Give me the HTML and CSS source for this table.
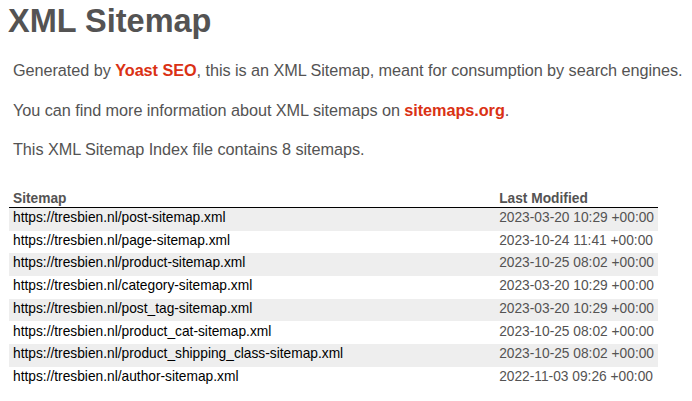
FILE: index.html
```html
<!DOCTYPE html>
<html>
<head>
<meta charset="utf-8">
<title>XML Sitemap</title>
<link rel="stylesheet" href="styles.css">
</head>
<body>
<div class="content">
  <h1 class="title">XML Sitemap</h1>
  <p class="expl">Generated by <a href="#">Yoast SEO</a>, this is an XML Sitemap, meant for consumption by search engines.</p>
  <p class="expl">You can find more information about XML sitemaps on <a href="#">sitemaps.org</a>.</p>
  <p class="expl">This XML Sitemap Index file contains 8 sitemaps.</p>
  <table class="sitemap">
    <thead>
      <tr><th class="col-loc">Sitemap</th><th class="col-mod">Last Modified</th></tr>
    </thead>
    <tbody>
      <tr><td><a href="#">https://tresbien.nl/post-sitemap.xml</a></td><td>2023-03-20 10:29 +00:00</td></tr>
      <tr><td><a href="#">https://tresbien.nl/page-sitemap.xml</a></td><td>2023-10-24 11:41 +00:00</td></tr>
      <tr><td><a href="#">https://tresbien.nl/product-sitemap.xml</a></td><td>2023-10-25 08:02 +00:00</td></tr>
      <tr><td><a href="#">https://tresbien.nl/category-sitemap.xml</a></td><td>2023-03-20 10:29 +00:00</td></tr>
      <tr><td><a href="#">https://tresbien.nl/post_tag-sitemap.xml</a></td><td>2023-03-20 10:29 +00:00</td></tr>
      <tr><td><a href="#">https://tresbien.nl/product_cat-sitemap.xml</a></td><td>2023-10-25 08:02 +00:00</td></tr>
      <tr><td><a href="#">https://tresbien.nl/product_shipping_class-sitemap.xml</a></td><td>2023-10-25 08:02 +00:00</td></tr>
      <tr><td><a href="#">https://tresbien.nl/author-sitemap.xml</a></td><td>2022-11-03 09:26 +00:00</td></tr>
    </tbody>
  </table>
</div>
</body>
</html>
```
FILE: styles.css
```css
body {
  margin: 3px 8px 8px 8px;
  font-family: "Liberation Sans", Arial, Helvetica, sans-serif;
  font-size: 16.25px;
  color: #545353;
  background: #fff;
}
.title {
  font-size: 32.5px;
  font-weight: bold;
  margin: 0 0 22px 0;
  line-height: 36.3px;
}
.expl {
  margin: 20px 5px;
  line-height: 1.2em;
  white-space: nowrap;
  letter-spacing: -0.06px;
}
.expl a {
  color: #da3114;
  font-weight: bold;
  text-decoration: none;
}
.sitemap {
  border: none;
  border-collapse: collapse;
  width: 649px;
  margin: 30.1px 0 0 1px;
}
.sitemap th {
  text-align: left;
  font-size: 13.75px;
  font-weight: bold;
  padding: 1px 4px 1px 4px;
  border-bottom: 1px solid #000;
  white-space: nowrap;
}
.sitemap th.col-mod {
  width: 153px;
}
.sitemap td {
  font-size: 13.75px;
  line-height: 16.7px;
  padding: 2.2px 4px 3.8px 4px;
  white-space: nowrap;
}
.sitemap td a {
  color: #000;
  text-decoration: none;
}
.sitemap tbody tr:nth-child(odd) td {
  background-color: #eee;
}
```
